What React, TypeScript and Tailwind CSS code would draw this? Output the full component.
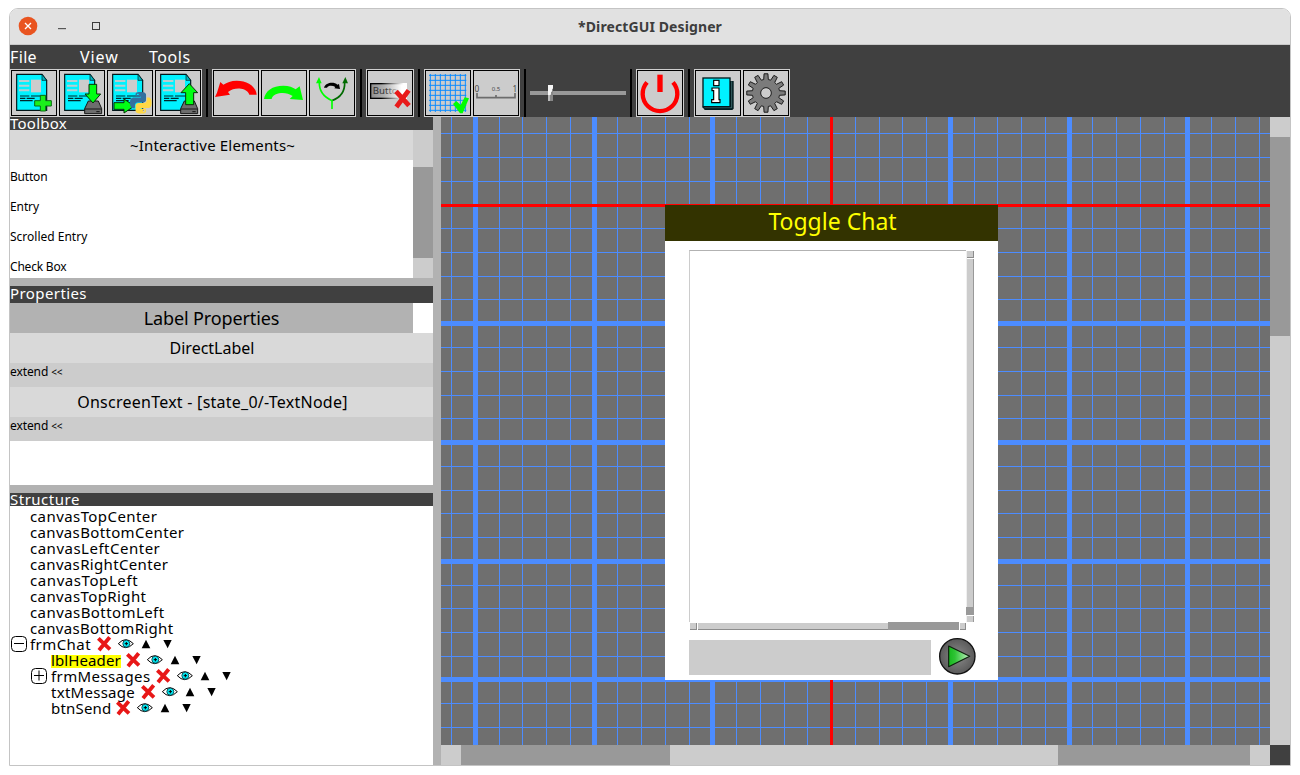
import React from "react";

type Kids = { children?: React.ReactNode };

function Tool({ vb, children }: Kids & { vb: string }) {
  return (
    <button className="block size-[46px] shrink-0 border border-black bg-[#cccccc]">
      <svg className="block size-[44px]" viewBox={vb}>{children}</svg>
    </button>
  );
}

function Group({ children }: Kids) {
  return <div className="flex h-12 shrink-0 gap-0.5 bg-[#cfcfcf] p-px">{children}</div>;
}

function Separator() {
  return <div className="mx-1 h-12 w-0.5 shrink-0 bg-black" />;
}

function Page() {
  return (
    <g>
      <path d="M50 223H126L140 241V331H50Z" fill="#00f2ff" stroke="#001518" strokeWidth="3.5" />
      <path d="M126 223V241H140Z" fill="#00b6c0" stroke="#001518" strokeWidth="2" />
      <path d="M57 243H88M57 257H88M57 271H88" stroke="#b9cdd0" strokeWidth="6" />
      <rect x="93" y="239" width="30" height="38" fill="#cccccc" />
      <path d="M60 288H88M93 288H132M60 295H76M80 295H104M60 302H98" stroke="#00282c" strokeWidth="3.5" />
    </g>
  );
}

function Disk() {
  return (
    <g stroke="#161616" strokeWidth="3">
      <path d="M121 303H151L161 326V341H110V326Z" fill="#6d6d6d" />
      <path d="M110 327H161" />
      <path d="M145 335H155" stroke="#111" />
    </g>
  );
}

const snake =
  "M14.25.18l.9.2.73.26.59.3.45.32.34.34.25.34.16.33.1.3.04.26.02.2-.01.13V8.5l-.05.63-.13.55-.21.46-.26.38-.3.31-.33.25-.35.19-.35.14-.33.1-.3.07-.26.04-.21.02H8.77l-.69.05-.59.14-.5.22-.41.27-.33.32-.27.35-.2.36-.15.37-.1.35-.07.32-.04.27-.02.21v3.06H3.17l-.21-.03-.28-.07-.32-.12-.35-.18-.36-.26-.36-.36-.35-.46-.32-.59-.28-.73-.21-.88-.14-1.05-.05-1.23.06-1.22.16-1.04.24-.87.32-.71.36-.57.4-.44.42-.33.42-.24.4-.16.36-.1.32-.05.24-.01h.16l.06.01h8.16v-.83H6.18l-.01-2.75-.02-.37.05-.34.11-.31.17-.28.25-.26.31-.23.38-.2.44-.18.51-.15.58-.12.64-.1.71-.06.77-.04.84-.02 1.27.05zm-6.3 1.98l-.23.33-.08.41.08.41.23.34.33.22.41.09.41-.09.33-.22.23-.34.08-.41-.08-.41-.23-.33-.33-.22-.41-.09-.41.09z";

function gearPoints() {
  const pts: string[] = [];
  for (let i = 0; i < 12; i++) {
    const c = (i * Math.PI) / 6;
    const ring: [number, number][] = [[-0.17, 41], [-0.1, 58], [0.1, 58], [0.17, 41]];
    for (const [da, r] of ring) {
      pts.push(`${(438 + r * Math.sin(c + da)).toFixed(1)},${(99 - r * Math.cos(c + da)).toFixed(1)}`);
    }
  }
  return pts.join(" ");
}

function Toolbar() {
  return (
    <div className="flex h-12 items-start">
      <Group>
        <Tool vb="36 213 132 132">
          <Page />
          <path d="M121 286H137V302H154V318H137V333H121V318H104V302H121Z" fill="#1bf01b" stroke="#0a6a12" strokeWidth="3" />
        </Tool>
        <Tool vb="36 213 132 132">
          <Page />
          <Disk />
          <path d="M123 253H146V282H158L135 309L111 282H123Z" fill="#00ff14" stroke="#062f06" strokeWidth="3" />
        </Tool>
        <Tool vb="36 213 132 132">
          <Page />
          <path d="M54 308H84V297L115 318L84 339V328H54Z" fill="#00ff14" stroke="#062f06" strokeWidth="3" />
          <g transform="translate(102 276) scale(2.7)">
            <path d={snake} fill="#34719f" />
            <path d={snake} fill="#ffd845" transform="rotate(180 12 12)" />
          </g>
        </Tool>
        <Tool vb="36 213 132 132">
          <Page />
          <Disk />
          <path d="M136 251L161 278H149V314H125V278H111Z" fill="#00ff14" stroke="#062f06" strokeWidth="3" />
        </Tool>
      </Group>
      <Separator />
      <Group>
        <Tool vb="27 33 132 132">
          <path d="M155 104C152 78 128 62 95 62C78 62 66 67 55 74L46 66L36 98L30 111L75 104L69 96C80 87 95 84 108 86C122 88 131 95 133 104Z" fill="#ff0000" />
        </Tool>
        <Tool vb="171 33 132 132">
          <path d="M177 117C180 93 202 77 235 77C252 77 264 82 272 88L284 79L294 120L254 117L263 108C252 100 240 98 228 99C212 101 202 107 200 117Z" fill="#00ff00" />
        </Tool>
        <Tool vb="315 33 132 132">
          <g fill="none" strokeWidth="5">
            <path d="M380 122C410 112 420 92 419 66" stroke="#006a00" />
            <path d="M381 147V122C350 108 342 88 343 66" stroke="#00ff00" />
          </g>
          <path d="M421 51L429 70H412Z" fill="#006a00" />
          <path d="M342 51L350 70H333Z" fill="#00ff00" />
          <path d="M357 83C362 66 388 65 397 74L402 72L405 87L388 85L391 81C382 76 370 76 366 83Z" fill="#000" />
        </Tool>
      </Group>
      <Separator />
      <Group>
        <Tool vb="489 33 132 132">
          <defs>
            <linearGradient id="fade" x1="0" x2="1">
              <stop offset="0" stopColor="#8f8f8f" />
              <stop offset="0.35" stopColor="#b0b0b0" />
              <stop offset="0.85" stopColor="#fff" />
            </linearGradient>
            <linearGradient id="edge" x1="0" x2="1">
              <stop offset="0" stopColor="#000" />
              <stop offset="0.3" stopColor="#000" />
              <stop offset="0.9" stopColor="#fff" />
            </linearGradient>
            <linearGradient id="ink" x1="0" x2="1">
              <stop offset="0.5" stopColor="#333" />
              <stop offset="1" stopColor="#ccc" />
            </linearGradient>
          </defs>
          <rect x="495" y="69" width="111" height="48" fill="url(#edge)" />
          <rect x="499" y="73" width="107" height="40" fill="url(#fade)" />
          <text x="503" y="102" fontSize="29" fontFamily="Noto Sans, sans-serif" fill="url(#ink)">Butto</text>
          <path d="M573 94L612 137M611 91L574 141" stroke="#e81a1a" strokeWidth="14.500" />
        </Tool>
      </Group>
      <Separator />
      <Group>
        <Tool vb="33 33 132 132">
          <path
            d="M46 42V156M61 42V156M76 42V156M91 42V156M106 42V156M121 42V156M136 42V156M151 42V156M42 46H154M42 61H154M42 76H154M42 91H154M42 106H154M42 121H154M42 136H154M42 151H154"
            stroke="#0c8cff"
            strokeWidth="3"
          />
          <path d="M114 132L124 123L137 135L149 112L162 115L143 160H135Z" fill="#00ff00" />
        </Tool>
        <Tool vb="177 33 132 132">
          <g fontFamily="Noto Sans, sans-serif" fill="#4a4a4a" textAnchor="middle">
            <text x="186" y="95" fontSize="25">0</text>
            <text x="243" y="94" fontSize="18">0.5</text>
            <text x="300" y="95" fontSize="25">1</text>
          </g>
          <path d="M186 99V113H300V99M243 105V113" fill="none" stroke="#6c6c6c" strokeWidth="5" />
        </Tool>
      </Group>
      <Separator />
      <div className="flex h-12 w-24 shrink-0 items-center">
        <div className="h-1 w-[18px] bg-[#999999]" />
        <svg className="mt-[-1px] h-4 w-[5px]" viewBox="0 0 5 16" shapeRendering="crispEdges">
          <path d="M0 0H5V16H0Z" fill="#ddd" />
          <path d="M5 2V16H2V12Z" fill="#888" />
          <path d="M0 0H5V2L2 11H0Z" fill="#f6f6f6" />
          <path d="M0 10H2V16H0Z" fill="#bbb" />
        </svg>
        <div className="h-1 flex-1 bg-[#999999]" />
      </div>
      <Separator />
      <Group>
        <Tool vb="54 33 132 132">
          <path d="M81 67A52 52 0 1 0 159 67" fill="none" stroke="#ff0000" strokeWidth="13" />
          <rect x="112" y="44" width="16" height="52" fill="#ff0000" />
        </Tool>
      </Group>
      <Separator />
      <Group>
        <Tool vb="228 33 132 132">
          <path d="M260 63H341V146L337 150H254L248 142Z" fill="#001c20" />
          <path d="M253 143H335V64" fill="none" stroke="#57868a" strokeWidth="2" />
          <rect x="249" y="54" width="81" height="86" fill="#00f2ff" stroke="#00181c" strokeWidth="4" />
          <rect x="281" y="61" width="16" height="16" fill="#fff" stroke="#000" strokeWidth="3.5" />
          <path d="M276 84H297V119H300V128H275V119H281V92H276Z" fill="#fff" stroke="#000" strokeWidth="3.5" />
        </Tool>
        <Tool vb="372 33 132 132">
          <polygon points={gearPoints()} fill="#7b7b7b" stroke="#1c1c1c" strokeWidth="3" />
          <circle cx="438" cy="99" r="16" fill="#cccccc" stroke="#1c1c1c" strokeWidth="3" />
        </Tool>
      </Group>
    </div>
  );
}

function Toolbox() {
  const item = "h-[30px] text-[12px] leading-[34px]";
  return (
    <section>
      <h2 className="h-[13px] bg-[#404040] text-[15px] leading-[13px] tracking-[0.25px] text-white">Toolbox</h2>
      <div className="flex h-[148px] bg-white">
        <div className="w-[403px] overflow-hidden">
          <div className="h-[30px] bg-[#d9d9d9] pl-0.5 text-center text-[15px] leading-[30px] tracking-[0.18px]">~Interactive Elements~</div>
          <div className={`${item} tracking-[-0.2px]`}>Button</div>
          <div className={`${item} tracking-[-0.1px]`}>Entry</div>
          <div className={item}>Scrolled Entry</div>
          <div className={`${item} tracking-[-0.2px]`}>Check Box</div>
        </div>
        <div className="w-5 bg-[#cccccc] pt-[37px]">
          <div className="h-[91px] bg-[#999999]" />
        </div>
      </div>
    </section>
  );
}

function Properties() {
  const extend = "h-6 bg-[#cccccc] text-[12px] leading-[17px] tracking-[-0.1px]";
  return (
    <section>
      <h2 className="h-[17px] bg-[#404040] text-[15px] leading-[14px] tracking-[0.41px] text-white">Properties</h2>
      <div className="h-[182px] bg-white">
        <div className="h-[30px] w-[403px] bg-[#b2b2b2] text-center text-[18px] leading-[30px] tracking-[-0.12px]">Label Properties</div>
        <div className="h-[30px] bg-[#d9d9d9] pr-[19px] text-center text-[16px] leading-[31px]">DirectLabel</div>
        <div className={extend}>extend <span className="text-[10px]">&lt;&lt;</span></div>
        <div className="h-[30px] bg-[#d9d9d9] pr-[18px] text-center text-[16px] leading-[31px] tracking-[0.25px]">OnscreenText - [state_0/-TextNode]</div>
        <div className={extend}>extend <span className="text-[10px]">&lt;&lt;</span></div>
      </div>
    </section>
  );
}

function RowIcons() {
  return (
    <svg className="block h-4 w-[75px] shrink-0" viewBox="291 453 225 48">
      <path d="M295 460L330 493M329 457L297 496" stroke="#e81717" strokeWidth="11.500" />
      <path d="M355 476Q377 452 400 476Q377 500 355 476Z" fill="#fff" stroke="#000" strokeWidth="3" />
      <circle cx="379" cy="476" r="10.500" fill="#00eaf5" stroke="#003a40" strokeWidth="2.500" />
      <path d="M379 471V481M374 476H384" stroke="#000" strokeWidth="3" />
      <path d="M438 464L451 490H425Z" />
      <path d="M490 465H515L503 490Z" />
    </svg>
  );
}

function Toggle({ open }: { open: boolean }) {
  return (
    <svg className="block h-4 w-5 shrink-0" viewBox="0 0 20 16">
      <rect x="1.500" y="0.500" width="15" height="15" rx="4" fill="#fff" stroke="#000" />
      <path d={open ? "M4 7.500H14" : "M4 7.500H14M9 2.500V12.500"} stroke="#000" />
    </svg>
  );
}

function Structure() {
  const anchor = "h-4 pl-5";
  return (
    <section className="flex flex-1 flex-col">
      <h2 className="h-[13px] bg-[#404040] text-[15px] leading-[12px] tracking-[0.5px] text-white">Structure</h2>
      <div className="flex-1 bg-white pt-0.5 text-[15px] leading-4">
        <div className={`${anchor} tracking-[0.42px]`}>canvasTopCenter</div>
        <div className={`${anchor} tracking-[0.34px]`}>canvasBottomCenter</div>
        <div className={`${anchor} tracking-[0.5px]`}>canvasLeftCenter</div>
        <div className={`${anchor} tracking-[0.34px]`}>canvasRightCenter</div>
        <div className={`${anchor} tracking-[0.58px]`}>canvasTopLeft</div>
        <div className={`${anchor} tracking-[0.4px]`}>canvasTopRight</div>
        <div className={`${anchor} tracking-[0.42px]`}>canvasBottomLeft</div>
        <div className={`${anchor} tracking-[0.32px]`}>canvasBottomRight</div>
        <div className="flex h-4">
          <Toggle open />
          <div className="w-[67px] tracking-[0.43px]">frmChat</div>
          <RowIcons />
        </div>
        <div className="flex h-4 pl-[41px]">
          <div className="w-[75px]">
            <div className="mt-[3px] h-[13px] w-[70px] bg-[#ffff00] leading-[11px] tracking-[0.1px]">lblHeader</div>
          </div>
          <RowIcons />
        </div>
        <div className="flex h-4 pl-5">
          <Toggle open={false} />
          <div className="w-[106px] pl-px tracking-[0.4px]">frmMessages</div>
          <RowIcons />
        </div>
        <div className="flex h-4 pl-[41px]">
          <div className="w-[90px] tracking-[0.27px]">txtMessage</div>
          <RowIcons />
        </div>
        <div className="flex h-4 pl-[41px]">
          <div className="w-[65px] tracking-[0.2px]">btnSend</div>
          <RowIcons />
        </div>
      </div>
    </section>
  );
}

const thinX = [451, 499, 522, 546, 570, 617, 641, 665, 689, 736, 760, 784, 807, 855, 879, 902, 926, 974, 997, 1021, 1045, 1092, 1116, 1140, 1164, 1211, 1235, 1259];
const thinY = [133, 157, 181, 228, 252, 276, 299, 347, 371, 395, 418, 466, 490, 513, 537, 585, 608, 632, 656, 703, 727];
const thickX = [473, 592, 710, 948, 1067, 1185];
const thickY = [321, 440, 559, 677];

function Grid() {
  return (
    <svg className="block h-[628px] w-[829px]" viewBox="441 117 829 628" shapeRendering="crispEdges">
      <rect x="441" y="117" width="829" height="628" fill="#6f6f6f" />
      <g fill="#4c8cff">
        {thinX.map((x) => <rect key={x} x={x} y="117" width="1" height="628" />)}
        {thinY.map((y) => <rect key={y} x="441" y={y} width="829" height="1" />)}
        {thickX.map((x) => <rect key={x} x={x} y="117" width="5" height="628" />)}
        {thickY.map((y) => <rect key={y} x="441" y={y} width="829" height="5" />)}
      </g>
      <rect x="830" y="117" width="3" height="628" fill="#ff0000" />
      <rect x="441" y="204" width="829" height="3" fill="#ff0000" />
    </svg>
  );
}

function ChatFrame() {
  return (
    <div className="absolute left-[224px] top-[88px] flex h-[475px] w-[333px] flex-col bg-white">
      <div className="h-9 bg-[#333300] pl-0.5 text-center text-[23px] leading-[33px] text-[#ffff00]">Toggle Chat</div>
      <div className="mt-[9px] ml-6 flex h-[372px]">
        <div className="w-[277px] border-l border-t border-l-[#cccccc] border-t-[#b2b2b2]" />
        <div className="mt-px w-2 border-l border-l-[#f0f0f0]">
          <div className="h-[7px] border-r border-b border-[#8c8c8c] bg-[#cccccc]" />
          <div className="mt-px h-[348px] border-r border-[#999999] bg-[#cccccc]" />
          <div className="ml-[-1px] h-2 bg-[#999999]" />
          <div className="mt-px h-[6px] border-r border-[#999999] bg-[#cccccc]" />
        </div>
      </div>
      <div className="ml-[25px] flex h-2 w-[276px]">
        <div className="mt-px w-[7px] border-r border-b border-[#8c8c8c] bg-[#cccccc]" />
        <div className="mt-px ml-px w-[190px] border-b border-[#8c8c8c] bg-[#cccccc]" />
        <div className="w-[71px] bg-[#999999]" />
        <div className="mt-px ml-px w-[6px] border-r border-b border-[#8c8c8c] bg-[#cccccc]" />
      </div>
      <div className="ml-6 flex">
        <div className="mt-[10px] h-[35px] w-[242px] bg-[#cccccc]" />
        <svg className="ml-[7px] mt-[7px] size-[38px]" viewBox="864 141 114 114">
          <defs>
            <radialGradient id="disc">
              <stop offset="0" stopColor="#8a8a8a" />
              <stop offset="1" stopColor="#5a5a5a" />
            </radialGradient>
            <linearGradient id="go" x1="0" x2="1">
              <stop offset="0" stopColor="#16b81c" />
              <stop offset="0.3" stopColor="#2fc435" />
              <stop offset="1" stopColor="#c4f2c6" />
            </linearGradient>
          </defs>
          <circle cx="922" cy="199" r="53" fill="url(#disc)" stroke="#111" strokeWidth="4" />
          <path d="M896 168L959 199L896 230Z" fill="url(#go)" stroke="#0c200c" strokeWidth="3.500" strokeLinejoin="round" />
        </svg>
      </div>
    </div>
  );
}

export default function App() {
  return (
    <div className="h-[775px] w-[1300px] overflow-hidden bg-white pl-[9px] pt-2 font-['Noto_Sans',sans-serif] text-black">
      <div className="flex h-[758px] w-[1282px] flex-col overflow-hidden rounded-t-[9px] border border-[#c4c4c4]">
        <header className="flex h-9 items-center border-b border-[#c9c9c9] bg-[#e1e1e1]">
          <svg className="h-9 w-28" viewBox="30 27 336 108">
            <circle cx="84" cy="78" r="28" fill="#e95420" />
            <path d="M75 69L93 87M93 69L75 87" stroke="#fff" strokeWidth="4" />
            <path d="M174 86H198" stroke="#3d3d3d" strokeWidth="3" />
            <rect x="277.500" y="67.500" width="21" height="21" fill="none" stroke="#3d3d3d" strokeWidth="3" />
          </svg>
          <h1 className="w-[1056px] text-center text-[14px] font-bold tracking-[0.11px] text-[#3d3d3d]">*DirectGUI Designer</h1>
        </header>
        <div className="h-[72px] bg-[#404040]">
          <nav className="flex h-6 text-[16px] leading-6 text-white">
            <div className="w-[70px] tracking-[0.35px]">File</div>
            <div className="w-[69px] tracking-[0.9px]">View</div>
            <div className="tracking-[0.55px]">Tools</div>
          </nav>
          <Toolbar />
        </div>
        <main className="flex h-[648px]">
          <aside className="flex w-[423px] flex-col gap-2 bg-[#b2b2b2]">
            <Toolbox />
            <Properties />
            <Structure />
          </aside>
          <div className="w-2 bg-[#b2b2b2]" />
          <div className="w-[829px]">
            <div className="relative h-[628px]">
              <Grid />
              <ChatFrame />
            </div>
            <div className="flex h-5 bg-[#cccccc]">
              <div className="ml-5 w-[209px] bg-[#999999]" />
              <div className="ml-[388px] w-48 bg-[#999999]" />
            </div>
          </div>
          <div className="flex w-5 flex-col bg-[#cccccc]">
            <div className="mt-5 h-[199px] bg-[#999999]" />
            <div className="mt-auto h-5 bg-[#404040]" />
          </div>
        </main>
      </div>
    </div>
  );
}
